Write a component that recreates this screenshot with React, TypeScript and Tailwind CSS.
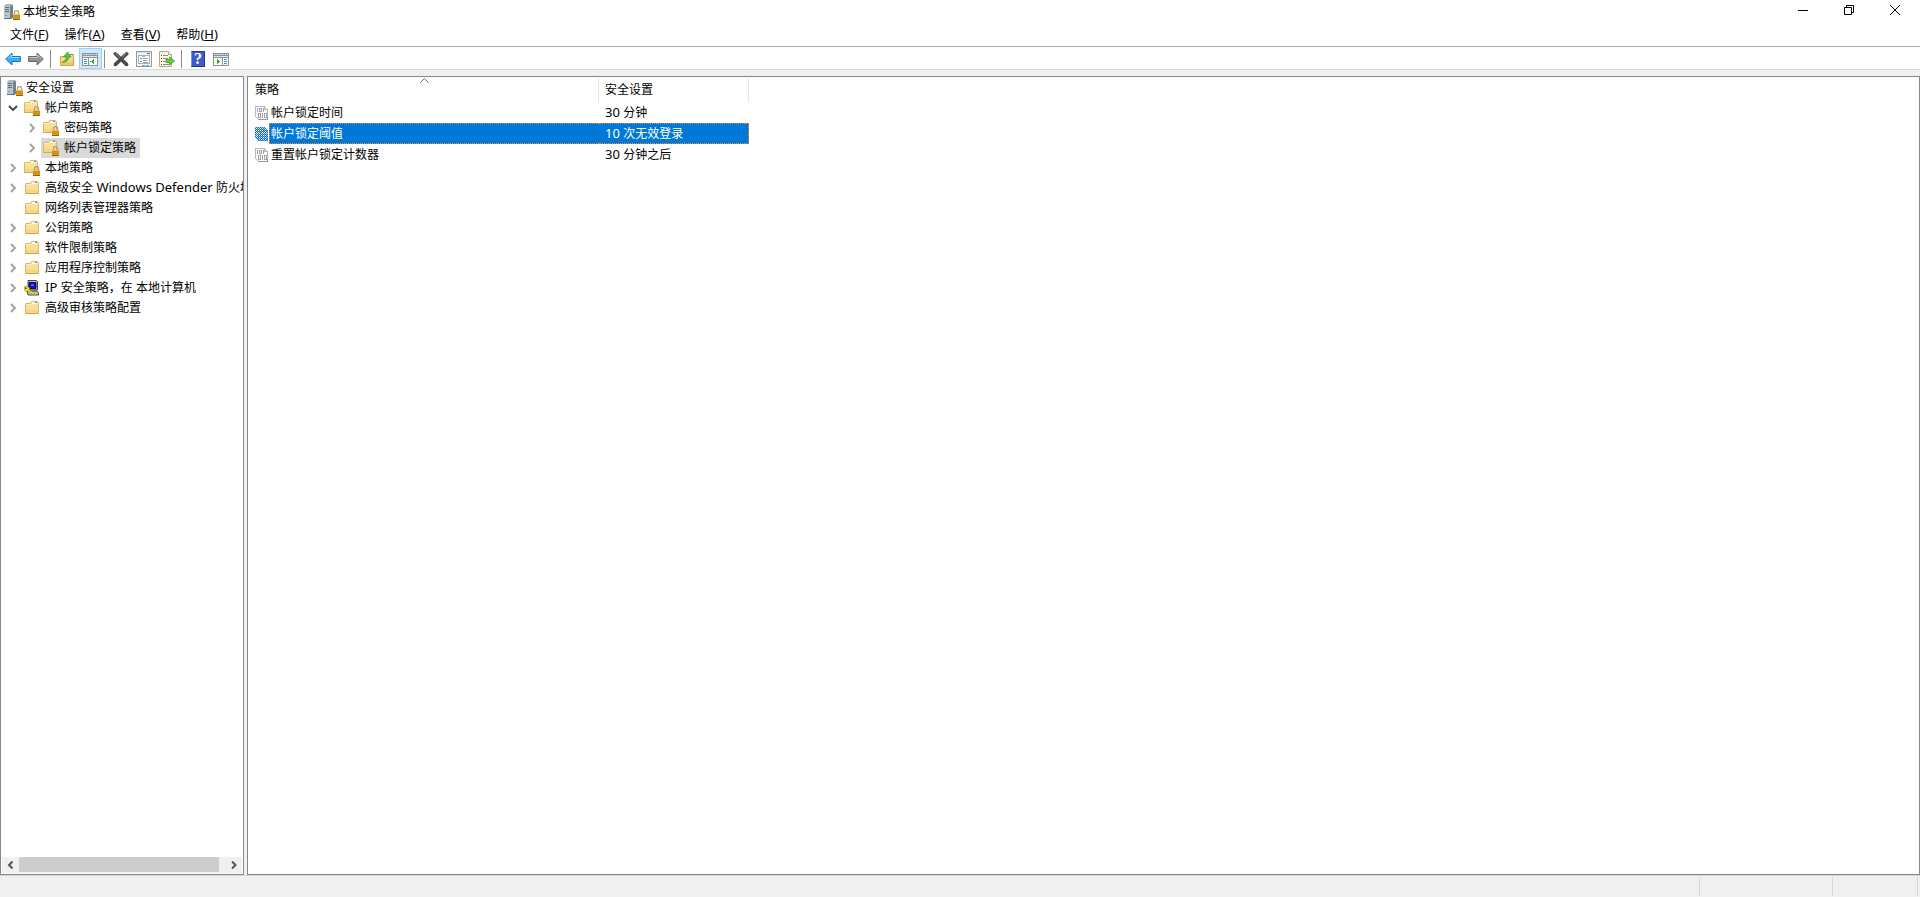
import React, { useState } from "react"
import clsx from "clsx"

// -------------------------------------------------------------------
// Data
// -------------------------------------------------------------------

type IconKind = "server" | "lockedFolder" | "folder" | "ipsec"

interface TreeItem {
  label: string
  level: 0 | 1 | 2
  icon: IconKind
  state?: "open" | "closed"
}

const TREE: TreeItem[] = [
  { label: "安全设置", level: 0, icon: "server" },
  { label: "帐户策略", level: 1, icon: "lockedFolder", state: "open" },
  { label: "密码策略", level: 2, icon: "lockedFolder", state: "closed" },
  { label: "帐户锁定策略", level: 2, icon: "lockedFolder", state: "closed" },
  { label: "本地策略", level: 1, icon: "lockedFolder", state: "closed" },
  { label: "高级安全 Windows Defender 防火墙", level: 1, icon: "folder", state: "closed" },
  { label: "网络列表管理器策略", level: 1, icon: "folder" },
  { label: "公钥策略", level: 1, icon: "folder", state: "closed" },
  { label: "软件限制策略", level: 1, icon: "folder", state: "closed" },
  { label: "应用程序控制策略", level: 1, icon: "folder", state: "closed" },
  { label: "IP 安全策略，在 本地计算机", level: 1, icon: "ipsec", state: "closed" },
  { label: "高级审核策略配置", level: 1, icon: "folder", state: "closed" },
]

const POLICIES = [
  { name: "帐户锁定时间", setting: "30 分钟" },
  { name: "帐户锁定阈值", setting: "10 次无效登录" },
  { name: "重置帐户锁定计数器", setting: "30 分钟之后" },
]

const MENUS = [
  { label: "文件", accel: "F" },
  { label: "操作", accel: "A" },
  { label: "查看", accel: "V" },
  { label: "帮助", accel: "H" },
]

// Latin runs are set one size up so they sit level with the hanzi
function MixedText({ text }: { text: string }) {
  return (
    <span className="whitespace-pre">
      {text.split(/([ -~]+)/).map((part, i) =>
        i % 2 ? (
          <span key={i} className="text-[13px]">{part}</span>
        ) : (
          part
        )
      )}
    </span>
  )
}

// -------------------------------------------------------------------
// Icons
// -------------------------------------------------------------------

const svgProps = {
  width: 16,
  height: 16,
  viewBox: "0 0 16 16",
  className: "shrink-0",
  "aria-hidden": true,
}

function Padlock() {
  return (
    <g>
      <path d="M10.500 10.500V8.600a2 2 0 0 1 4 0v1.900" fill="none" stroke="#a39c88" strokeWidth="1.3" />
      <rect x="9" y="10" width="7" height="5.500" fill="#e0a21a" />
      <path d="M9 11.800h7M9 13.600h7" stroke="#b97d10" strokeWidth=".7" />
      <path d="M9 10.400h7" stroke="#f6d060" strokeWidth=".8" />
      <path d="M9 15.500h7" stroke="#8f6210" />
    </g>
  )
}

function ServerIcon() {
  return (
    <svg {...svgProps}>
      <path d="M0 2l2-2h6l1 1v12l-2 2H0z" fill="#a9b6bd" />
      <path d="M6 2l3-1v13H6z" fill="#71828c" />
      <path d="M0 2h6v13H0z" fill="#b7c4ca" />
      <path d="M1 3.500h4M1 5.500h4M1 7.500h4" stroke="#5d6e78" />
      <path d="M0 14.500h8" stroke="#63747d" />
      <path d="M1 11h2v1H1z" fill="#5bb85b" />
      <Padlock />
    </svg>
  )
}

function FolderIcon({ locked = false }: { locked?: boolean }) {
  return (
    <svg {...svgProps}>
      <g transform={locked ? "translate(-1 -1)" : undefined}>
        <path d="M1.500 3.500h5l1-2h6l1 1v11h-13z" fill="#fbe09a" stroke="#dcb766" />
        <path d="M8 2h5v2H8z" fill="#fff" />
        <path d="M11 2h2v1h-2z" fill="#3f94de" />
        <path d="M2 6h6l1-1h5v8H2z" fill="#fbdf96" />
        <path d="M2 10h12v3H2z" fill="#f7d482" />
        <path d="M2 4.500h5" stroke="#fdf0c6" />
        <path d="M1 13.500h14" stroke="#d3aa54" />
      </g>
      {locked && <Padlock />}
    </svg>
  )
}

function IpsecIcon() {
  return (
    <svg {...svgProps}>
      <path d="M4 .5h8.500l1 1v8.500H4z" fill="#b9b9b9" stroke="#222" strokeWidth=".8" />
      <path d="M5 2.500h7v6H5z" fill="#1010d8" stroke="#000" strokeWidth=".8" />
      <path d="M7 5h3" stroke="#8aa8ff" />
      <path d="M3 11h10l1.500 2v2H4z" fill="#c6c6c6" stroke="#222" strokeWidth=".8" />
      <path d="M0 7l3-1 2.500 2-.5 2 6 3-1 2-6.500-4H1z" fill="#f8ea10" stroke="#8a8000" strokeWidth=".5" />
      <path d="M1 7.500h1.500v1.500H1z" fill="#333" />
    </svg>
  )
}

function TreeIcon({ kind }: { kind: IconKind }) {
  if (kind === "server") return <ServerIcon />
  if (kind === "ipsec") return <IpsecIcon />
  return <FolderIcon locked={kind === "lockedFolder"} />
}

function Arrow({ direction }: { direction: "back" | "forward" }) {
  const back = direction === "back"
  return (
    <svg {...svgProps}>
      <path
        d={back ? "M.7 8L7 2v3.500h8.400v5H7V14z" : "M15.300 8L9 2v3.500H.6v5H9V14z"}
        fill={back ? "#35b0f2" : "#929292"}
        stroke={back ? "#1878c0" : "#666"}
      />
      <path
        d={back ? "M2.800 7.400L6.400 4v2.500h8" : "M1.500 6.500h8V4l3.700 3.400"}
        fill="none"
        stroke={back ? "#8fdcff" : "#c4c4c4"}
      />
    </svg>
  )
}

function UpFolderIcon() {
  return (
    <svg {...svgProps}>
      <path d="M1.500 5.500h6l1-2h6v11h-13z" fill="#f8d98b" stroke="#cfa64f" />
      <path d="M2 11h12v3H2z" fill="#efc665" />
      <path d="M12 3h2v1h-2z" fill="#3f94de" />
      <path d="M3.500 11c3-1 4-3 3.800-5.200H4.500L8.500 1l3.500 5H9.600c0 3-2 5.400-6.100 5.200z" fill="#56cb3a" stroke="#2f9422" strokeWidth=".7" />
    </svg>
  )
}

// Console window with a side pane, shared by the two show/hide buttons
function PaneIcon({ side }: { side: "left" | "right" }) {
  return (
    <svg {...svgProps} shapeRendering="crispEdges">
      <rect x="0" y="2" width="16" height="13" fill="#8d949b" />
      <path d="M1 3.500h10" stroke="#c3c8cd" />
      <path d="M12 3.500h1M14 3.500h1" stroke="#fff" />
      <path d="M1 5.500h14" stroke="#e2e5e8" />
      {side === "left" ? (
        <>
          <path d="M1 7h5v7H1zM7 7h8v7H7z" fill="#fff" />
          <path d="M2 8.500h3M2 10.500h3M2 12.500h3" stroke="#4c8fd0" />
          <path d="M12 8v5L8.500 10.500z" fill="#3bab28" />
        </>
      ) : (
        <>
          <path d="M1 7h8v7H1zM10 7h5v7h-5z" fill="#fff" />
          <path d="M11 8.500h3M11 10.500h3M11 12.500h3" stroke="#4c8fd0" />
          <path d="M4 8v5l3.500-2.500z" fill="#3bab28" />
        </>
      )}
    </svg>
  )
}

function DeleteIcon() {
  return (
    <svg {...svgProps}>
      <path d="M2.300 2.800l11.200 10.600M13.700 2.800L2.500 13.400" stroke="#4a4a4a" strokeWidth="3.600" strokeLinecap="round" />
      <path d="M2.300 2.500l4.700 4.400M13.300 2.500L9.600 6" stroke="#8a8a8a" strokeLinecap="round" />
    </svg>
  )
}

function PropertiesIcon() {
  return (
    <svg {...svgProps} shapeRendering="crispEdges">
      <rect x=".5" y=".5" width="15" height="15" fill="#f4f6f8" stroke="#979da3" />
      <path d="M1 1.500h14" stroke="#d7dbe0" />
      <path d="M11 2.500h3" stroke="#6a7178" />
      <rect x="2.500" y="4.500" width="11" height="8" fill="#fff" stroke="#aab2ba" />
      <path d="M3 4.500h5M6 5.500h3" stroke="#9fb0c0" />
      <path d="M4 7.500h2M4 10.500h2" stroke="#3f94de" />
      <path d="M7 7.500h5M7 9.500h4M7 11.500h5" stroke="#8fa0b0" />
      <path d="M6 14.500h3M10 14.500h3" stroke="#54b5e8" />
    </svg>
  )
}

function ExportIcon() {
  return (
    <svg {...svgProps}>
      <path d="M.5.5h9l3 3v12H.5z" fill="#fdf6da" stroke="#b5a98a" />
      <path d="M9.500.5v3h3" fill="#fff" stroke="#b5a98a" />
      <path d="M2 4.500h1M2 7.500h1M2 10.500h1M2 13.500h1" stroke="#555" />
      <path d="M4 4.500h5M4 7.500h5M4 10.500h4M4 13.500h6" stroke="#8c83a6" />
      <path d="M7 8.500h3.500V6L15.600 10l-5.100 4v-2.500H7z" fill="#5fcf3d" stroke="#37a026" strokeWidth=".8" />
    </svg>
  )
}

function HelpIcon() {
  return (
    <span className="flex h-4 w-3.5 items-center justify-center border border-[#24378c] border-l-[#7f95e0] bg-[#3e5cc8] font-['Liberation_Serif',serif] text-base leading-4 font-bold text-white">
      ?
    </span>
  )
}

function PolicyIcon({ selected }: { selected: boolean }) {
  return (
    <svg width="14" height="16" viewBox="0 0 14 16" className="shrink-0" aria-hidden shapeRendering="crispEdges">
      <defs>
        <pattern id="dither" width="2" height="2" patternUnits="userSpaceOnUse">
          <path d="M0 0h1v1H0zM1 1h1v1H1z" fill="#0078d7" />
        </pattern>
      </defs>
      <path d="M.5 1.500h9l3 3v10h-9l-3-3z" fill="#fafafa" stroke="#b9b9bd" />
      <path d="M9.500 1.500v3h3" fill="none" stroke="#b9b9bd" />
      <path d="M2.500 3v4M8.500 3v4M4.500 3.500h2v3h-2z" fill="none" stroke="#a4a4aa" />
      <path d="M3.500 8.500h2v4h-2zM7.500 8v5M9.500 8.500h2v4h-2z" fill="none" stroke="#a4a4aa" />
      <path d="M3 14.500h10M12.500 12v3" stroke="#98989e" />
      {selected && <path d="M0 1h10l3 3v11H3l-3-3z" fill="url(#dither)" />}
    </svg>
  )
}

function Chevron({ state }: { state: "open" | "closed" }) {
  return (
    <svg width="10" height="10" viewBox="0 0 10 10" aria-hidden>
      {state === "open" ? (
        <path d="M1 3l4 4 4-4" fill="none" stroke="#404040" strokeWidth="1.800" />
      ) : (
        <path d="M3 1l4 4-4 4" fill="none" stroke="#a0a0a0" strokeWidth="1.800" />
      )}
    </svg>
  )
}

// -------------------------------------------------------------------
// Window chrome
// -------------------------------------------------------------------

function TitleBar() {
  const control = "flex h-5 w-[46px] items-center justify-center hover:bg-[#e5e5e5]"
  return (
    <header className="flex h-6 items-start pr-0.5">
      <div className="flex flex-1 items-center gap-[3px] pt-1 pl-1">
        <ServerIcon />
        <h1>本地安全策略</h1>
      </div>
      <button className={control} aria-label="最小化">
        <svg width="10" height="10" viewBox="0 0 10 10" stroke="#000">
          <path d="M0 5.500h10" />
        </svg>
      </button>
      <button className={control} aria-label="向下还原">
        <svg width="10" height="10" viewBox="0 0 10 10" stroke="#000" fill="none">
          <path d="M.5 2.500h7v7h-7zM2.500 2.500v-2h7v7h-2" />
        </svg>
      </button>
      <button className={control} aria-label="关闭">
        <svg width="10" height="10" viewBox="0 0 10 10" stroke="#000">
          <path d="M0 0l10 10M10 0L0 10" />
        </svg>
      </button>
    </header>
  )
}

function MenuBar() {
  return (
    <nav className="flex h-[23px] items-center gap-4 border-b border-[#a8a8a8] pl-2.5">
      {MENUS.map((menu) => (
        <button key={menu.accel}>
          {menu.label}
          <span className="text-[13px]">(<u>{menu.accel}</u>)</span>
        </button>
      ))}
    </nav>
  )
}

function ToolButton({
  label,
  active,
  children,
}: {
  label: string
  active?: boolean
  children: React.ReactNode
}) {
  return (
    <button
      aria-label={label}
      aria-pressed={active}
      className={clsx(
        "flex h-[21px] w-[23px] items-center justify-center border pt-px pr-px",
        active ? "border-[#99d1ff] bg-[#cce8ff]" : "border-transparent"
      )}
    >
      {children}
    </button>
  )
}

function Separator() {
  return <div className="mr-[5px] ml-0.5 h-[18px] w-px bg-[#8a8a8a]" />
}

function Toolbar() {
  return (
    <div role="toolbar" className="flex h-[23px] items-center border-b border-[#d9d9d9] pt-px pl-0.5">
      <ToolButton label="后退"><Arrow direction="back" /></ToolButton>
      <ToolButton label="前进"><Arrow direction="forward" /></ToolButton>
      <Separator />
      <ToolButton label="向上一级"><UpFolderIcon /></ToolButton>
      <ToolButton label="显示/隐藏控制台树" active><PaneIcon side="left" /></ToolButton>
      <Separator />
      <ToolButton label="删除"><DeleteIcon /></ToolButton>
      <ToolButton label="属性"><PropertiesIcon /></ToolButton>
      <ToolButton label="导出列表"><ExportIcon /></ToolButton>
      <Separator />
      <ToolButton label="帮助"><HelpIcon /></ToolButton>
      <ToolButton label="显示/隐藏操作窗格"><PaneIcon side="right" /></ToolButton>
    </div>
  )
}

// -------------------------------------------------------------------
// Console tree
// -------------------------------------------------------------------

const INDENT = ["pl-1", "pl-1", "pl-[23px]"]

function ScrollBar() {
  const arrow = "flex w-[17px] shrink-0 items-center justify-center"
  return (
    <div className="mx-px mb-px flex h-4 bg-[#f0f0f0]">
      <button className={arrow} aria-label="向左滚动">
        <svg width="8" height="8" viewBox="0 0 8 8" fill="none" stroke="#555" strokeWidth="2">
          <path d="M5.500.5L2 4l3.500 3.500" />
        </svg>
      </button>
      <div className="flex flex-1">
        <div className="h-[15px] w-[97%] bg-[#cdcdcd]" />
      </div>
      <button className={arrow} aria-label="向右滚动">
        <svg width="8" height="8" viewBox="0 0 8 8" fill="none" stroke="#555" strokeWidth="2">
          <path d="M2 .5L5.500 4 2 7.500" />
        </svg>
      </button>
    </div>
  )
}

function ConsoleTree() {
  const [selected, setSelected] = useState("帐户锁定策略")

  return (
    <aside className="flex w-61 shrink-0 flex-col border border-[#828790] bg-white">
      <ul className="flex-1 overflow-hidden pt-px">
        {TREE.map((item) => (
          <li key={item.label} className={clsx("flex h-5 items-center", INDENT[item.level])}>
            {item.level > 0 && (
              <span className="flex w-[17px] shrink-0 justify-center pr-0.5">
                {item.state && <Chevron state={item.state} />}
              </span>
            )}
            <button
              onClick={() => setSelected(item.label)}
              className={clsx(
                "flex h-5 items-center pr-1 pl-0.5",
                item.level === 0 ? "gap-[3px]" : "gap-[5px]",
                item.label === selected && "bg-[#d9d9d9]"
              )}
            >
              <TreeIcon kind={item.icon} />
              <MixedText text={item.label} />
            </button>
          </li>
        ))}
      </ul>
      <ScrollBar />
    </aside>
  )
}

// -------------------------------------------------------------------
// Policy list
// -------------------------------------------------------------------

function PolicyList() {
  const [selected, setSelected] = useState("帐户锁定阈值")

  return (
    <main className="flex-1 border border-[#828790] bg-white">
      <table className="w-[501px] table-fixed border-separate border-spacing-0 text-left">
        <thead>
          <tr className="h-[25px]">
            <th className="relative w-[351px] p-0 pt-px font-normal">
              <div className="flex h-6 items-center border-r border-[#e5e5e5] pl-[7px]">策略</div>
              <svg
                width="9"
                height="5"
                viewBox="0 0 9 5"
                className="absolute top-px left-[172px]"
                fill="none"
                stroke="#666"
                aria-hidden
              >
                <path d="M.5 4.500l4-4 4 4" />
              </svg>
            </th>
            <th className="w-[150px] p-0 pt-px font-normal">
              <div className="flex h-6 items-center border-r border-[#e5e5e5] pl-1.5">安全设置</div>
            </th>
          </tr>
        </thead>
        <tbody>
          {POLICIES.map((policy) => {
            const active = policy.name === selected
            const fill = active
              ? "border-dotted border-[#ff8728] bg-[#0078d7] text-white"
              : "border-transparent"
            return (
              <tr key={policy.name} onClick={() => setSelected(policy.name)}>
                <td className="p-0 pl-[7px]">
                  <div className="flex items-center">
                    <PolicyIcon selected={active} />
                    <span className={clsx("flex h-[21px] flex-1 items-center border-y border-l pl-px", fill)}>
                      {policy.name}
                    </span>
                  </div>
                </td>
                <td className="p-0">
                  <div className={clsx("flex h-[21px] items-center border-y border-r pl-1.5", fill)}>
                    <MixedText text={policy.setting} />
                  </div>
                </td>
              </tr>
            )
          })}
        </tbody>
      </table>
    </main>
  )
}

function StatusBar() {
  return (
    <footer className="flex h-[22px] border-t border-[#d7d7d7] pt-px pr-0.5 pb-px">
      <div className="flex-1 border-r border-[#d7d7d7]" />
      <div className="w-[133px] border-r border-[#d7d7d7]" />
      <div className="w-[85px] border-r border-[#d7d7d7]" />
    </footer>
  )
}

export default function App() {
  return (
    <div className="flex h-screen flex-col bg-[#f0f0f0] font-['Noto_Sans','Noto_Sans_CJK_SC',sans-serif] text-xs text-black">
      <div className="bg-white">
        <TitleBar />
        <MenuBar />
        <Toolbar />
      </div>
      <div className="flex min-h-0 flex-1 gap-[3px] pt-1.5">
        <ConsoleTree />
        <PolicyList />
      </div>
      <StatusBar />
    </div>
  )
}
